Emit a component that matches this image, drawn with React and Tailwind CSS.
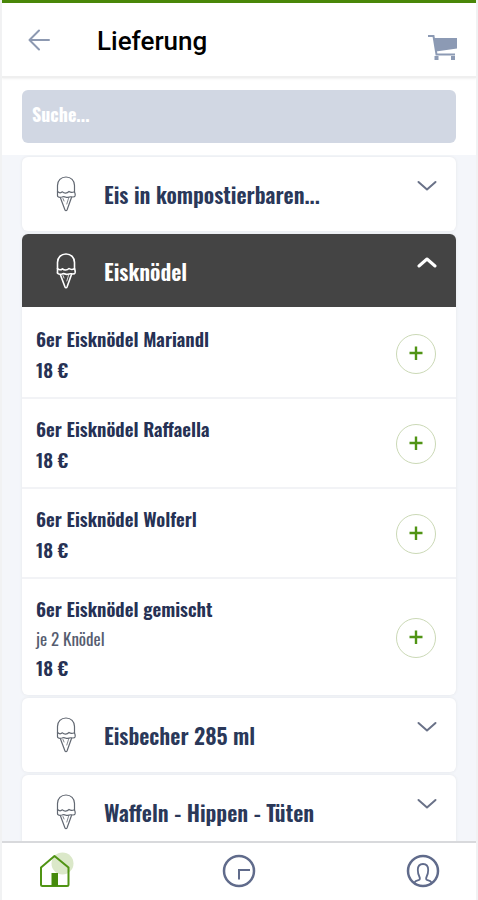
import { useState } from "react";

const categories = [
  { name: "Eis in kompostierbaren..." },
  {
    name: "Eisknödel",
    items: [
      { name: "6er Eisknödel Mariandl", price: "18 €" },
      { name: "6er Eisknödel Raffaella", price: "18 €" },
      { name: "6er Eisknödel Wolferl", price: "18 €" },
      { name: "6er Eisknödel gemischt", note: "je 2 Knödel", price: "18 €" },
    ],
  },
  { name: "Eisbecher 285 ml" },
  { name: "Waffeln - Hippen - Tüten" },
];

function ConeIcon({ open }) {
  return (
    <svg
      className={open ? "h-9 w-5 text-white" : "h-9 w-5 text-[#626872]"}
      viewBox="0 0 20 36"
      fill="none"
      stroke="currentColor"
      strokeWidth={open ? 1.6 : 1.2}
      strokeLinejoin="round"
      strokeLinecap="round"
      aria-hidden="true"
    >
      <path d="M1.5 20V9.500C1.5 4.500 5 1 10 1s8.500 3.500 8.500 8.500V16" />
      <path d="M1.500 15.500c1.500 1.500 3.500 1.500 5 .3 1.500 1.700 4.500 1.700 6.500-.3 1.500 1.200 3.500 1.200 5.500.3" />
      <path d="M1.500 20c.5 1.200 2.500 1.500 4.500 1 1.500-.8 2.500-.5 4 .2 2 .8 3.500-.7 5-.4 1.500.2 3.500.7 4-.8.400-1.500.2-2.700-.5-4" />
      <path d="M4.500 22 9 34c.4 1 1.600 1 2 0l4.500-12.500" />
      <path d="M7 22.500 8 25M12.500 22.500 10.800 28" strokeWidth="0.8" />
    </svg>
  );
}

function Chevron({ up }) {
  return (
    <svg
      className={up ? "h-3 w-5 text-white" : "h-3 w-5 text-[#6a7288]"}
      viewBox="0 0 20 12"
      fill="none"
      stroke="currentColor"
      strokeWidth={up ? 3 : 2}
      strokeLinecap="round"
      strokeLinejoin="round"
      aria-hidden="true"
    >
      <path d={up ? "M2 9 10 2l8 7" : "M1.500 2 10 9.500 18.500 2"} />
    </svg>
  );
}

function Item({ item }) {
  return (
    <li className="flex items-center justify-between border-b-2 border-[#f2f3f6] pt-[15px] pr-5 pb-3.5 pl-3.5 last:border-b-0">
      <div className="text-[19px] leading-7 font-semibold text-[#263154]">
        <h3 className="mb-[3px]">{item.name}</h3>
        {item.note && <p className="text-[17px] font-normal text-[#565d70]">{item.note}</p>}
        <p>{item.price}</p>
      </div>
      <button
        type="button"
        aria-label={`${item.name} hinzufügen`}
        className="flex size-10 items-center justify-center rounded-full border border-[#cbd9b6]"
      >
        <svg className="size-4 text-[#509414]" viewBox="0 0 16 16" fill="none" stroke="currentColor" strokeWidth="2.400" aria-hidden="true">
          <path d="M1.500 7h13M8 .5V14" />
        </svg>
      </button>
    </li>
  );
}

function Category({ category, open, onToggle }) {
  return (
    <section className="shrink-0 overflow-hidden rounded-md bg-white shadow-[0_0_3px_#e2e4e8]">
      <button
        type="button"
        aria-expanded={open}
        onClick={onToggle}
        className={
          open
            ? "flex h-[73px] w-full items-center bg-[#444444] pr-[19px] pl-5 text-left text-white"
            : "flex h-[74px] w-full items-center pr-[19px] pl-5 text-left text-[#2a3859]"
        }
      >
        <span className="flex w-12 justify-center">
          <ConeIcon open={open} />
        </span>
        <span className="ml-3.5 flex-1 text-[22px] leading-8 font-semibold">{category.name}</span>
        <span className="mb-4">
          <Chevron up={open} />
        </span>
      </button>
      {open && category.items && (
        <ul className="pt-0.5">
          {category.items.map((item) => (
            <Item key={item.name} item={item} />
          ))}
        </ul>
      )}
    </section>
  );
}

export default function App() {
  const [active, setActive] = useState("Eisknödel");
  return (
    <div className="flex h-screen flex-col border-x-2 border-[#f1f2f3] bg-white font-['Oswald','Roboto_Condensed','Open_Sans_Condensed','Liberation_Sans_Narrow',sans-serif]">
      <header className="z-10 flex h-[78px] shrink-0 items-center border-t-3 border-b-2 border-t-[#498708] border-b-[#efefef] pr-[19px] pl-[25px] shadow-[0_1px_2px_#f1f1f1]">
        <button type="button" aria-label="Zurück" className="mr-[46px]">
          <svg className="size-6 text-[#8d99b1]" viewBox="0 0 24 24" fill="none" stroke="currentColor" strokeWidth="2" strokeLinecap="round" strokeLinejoin="round" aria-hidden="true">
            <path d="M22 12H2.500M12 2.500 2.500 12l9.500 9.500" />
          </svg>
        </button>
        <h1 className="mt-0.5 flex-1 font-[Roboto,sans-serif] text-[26px] leading-8 font-medium text-black">Lieferung</h1>
        <button type="button" aria-label="Warenkorb" className="mt-4">
          <svg className="h-[27px] w-[30px] text-[#8c9ab4]" viewBox="0 0 30 27" aria-hidden="true">
            <path d="M1 2h5.500l3 18.500H28" fill="none" stroke="currentColor" strokeWidth="2" />
            <path d="M7 4H30V14.500L9 17.500z" fill="currentColor" />
            <path d="M7.500 22h4v4h-4zM24 22h4v4h-4z" fill="currentColor" />
          </svg>
        </button>
      </header>

      <div className="shrink-0 px-5 pt-3 pb-3">
        <input
          type="search"
          aria-label="Suche"
          placeholder="Suche..."
          className="block h-[53px] w-full rounded-md bg-[#d1d7e3] px-2.5 pb-1.5 text-lg font-bold text-white placeholder:text-white"
        />
      </div>

      <main className="flex min-h-0 flex-1 flex-col gap-[3px] overflow-hidden bg-[#f4f6fa] px-5 pt-0.5">
        {categories.map((category) => (
          <Category
            key={category.name}
            category={category}
            open={active === category.name}
            onToggle={() => setActive(active === category.name ? "" : category.name)}
          />
        ))}
      </main>

      <nav className="flex h-[59px] shrink-0 items-center justify-between border-t-2 border-[#d8d9dc] bg-white px-[35px]">
        <a href="#home" aria-label="Start">
          <svg className="h-9 w-9 overflow-visible" viewBox="0 0 36 36" aria-hidden="true">
            <circle cx="25.500" cy="9.500" r="11" fill="#dbe8c9" />
            <path d="M4 13.500 17.500 2 31.500 13.500V30.500a1.500 1.500 0 0 1-1.500 1.500H5.500A1.500 1.500 0 0 1 4 30.500z" fill="none" stroke="#509414" strokeWidth="2" strokeLinejoin="round" />
            <path d="M14.500 19H21v13h-6.500z" fill="#468a0c" />
          </svg>
        </a>
        <a href="#orders" aria-label="Bestellungen">
          <svg className="h-9 w-9 text-[#606b8b]" viewBox="0 0 36 36" fill="none" stroke="currentColor" aria-hidden="true">
            <circle cx="18" cy="17" r="15" strokeWidth="2.500" />
            <path d="M18 25.500V16h11" strokeWidth="2" />
          </svg>
        </a>
        <a href="#profile" aria-label="Profil">
          <svg className="h-9 w-9 text-[#606b8b]" viewBox="0 0 36 36" fill="none" stroke="currentColor" aria-hidden="true">
            <circle cx="18" cy="17" r="15" strokeWidth="2.500" />
            <path d="M9.500 28.500c1-1.800 2.500-2 4.500-2.500 1.200-.5 1-2 .3-3.500-1-2-1.500-4-1.500-6.500 0-4 2-6 5.200-6s5.200 2 5.200 6c0 2.500-.5 4.500-1.500 6.500-.7 1.500-.9 3 .3 3.500 2 .5 3.500.7 4.500 2.500" strokeWidth="1.800" />
          </svg>
        </a>
      </nav>
    </div>
  );
}
